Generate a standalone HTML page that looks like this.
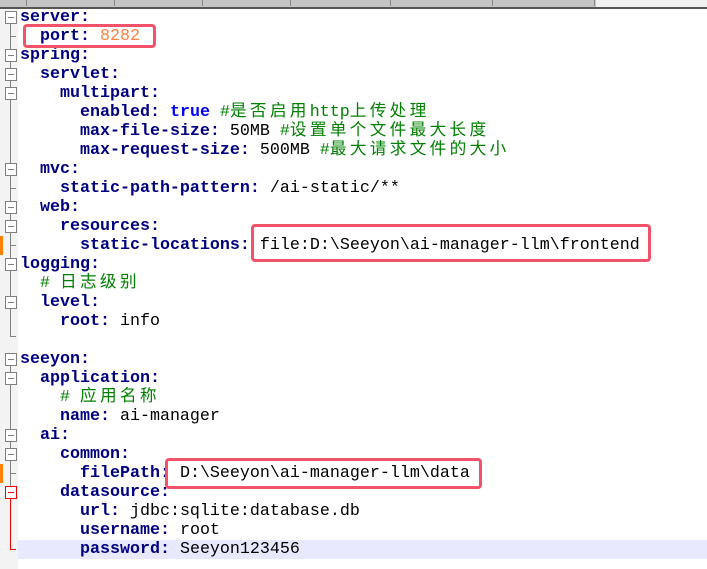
<!DOCTYPE html>
<html><head><meta charset="utf-8"><style>
body{margin:0;width:707px;height:569px;overflow:hidden;background:#fff;position:relative;font-family:"Liberation Mono","Noto Sans CJK SC",monospace;font-size:16.67px}
.tabs{position:absolute;left:0;top:0;width:707px;height:7px;background:#c4c4c4}
.tab{position:absolute;top:0;height:6px;border-right:1px solid #888}
.tl{position:absolute;left:0;top:7px;width:707px;height:2px;background:#555}
.gut{position:absolute;left:0;top:9px;width:18px;height:560px;background:#f3f3f3}
.ln{position:absolute;left:20px;height:19px;line-height:19px;white-space:pre;color:#000}
.k{color:#000080;font-weight:bold}
.t{color:#0000ff;font-weight:bold}
.c{color:#008000}
.z{letter-spacing:3.3px}
.o{color:#ff8040}
.box{position:absolute;border:3px solid #f2536a;border-radius:4px}
.fb{position:absolute;left:5px;width:10px;height:11px;border:1px solid #808080;background:#fff}
.fb:after{content:"";position:absolute;left:2px;top:5px;width:6px;height:1px;background:#808080}
.fb.r{border-color:#e00}.fb.r:after{background:#e00}
.vl{position:absolute;left:10px;width:1px;background:#808080}
.hl{position:absolute;height:1px;left:10px;width:6px;background:#808080}
.mk{position:absolute;left:0;width:3px;height:19px;background:#ff8000}
</style></head><body>
<div class="tabs">
<div class="tab" style="left:0;width:26px"></div>
<div class="tab" style="left:28px;width:86px"></div>
<div class="tab" style="left:116px;width:86px"></div>
<div class="tab" style="left:204px;width:86px"></div>
<div class="tab" style="left:292px;width:98px"></div>
<div class="tab" style="left:392px;width:100px"></div>
<div class="tab" style="left:494px;width:100px"></div>
<div style="position:absolute;left:596px;top:0;width:111px;height:7px;background:#f0f0f0"></div>
</div>
<div class="tl"></div>
<div class="gut"></div>
<div style="position:absolute;left:18px;top:540px;width:689px;height:19px;background:#e8e8ff"></div>

<div class="vl" style="top:22px;height:314px"></div>
<div class="vl" style="top:364px;height:185px"></div>
<div class="vl" style="top:497px;height:52px;background:#e00"></div>
<div class="hl" style="top:36px"></div>
<div class="hl" style="top:188px"></div>
<div class="hl" style="top:245px"></div>
<div class="hl" style="top:336px"></div>
<div class="hl" style="top:473px"></div>
<div class="hl" style="top:549px;background:#e00"></div>
<div class="fb" style="top:11px"></div>
<div class="fb" style="top:49px"></div>
<div class="fb" style="top:68px"></div>
<div class="fb" style="top:87px"></div>
<div class="fb" style="top:163px"></div>
<div class="fb" style="top:201px"></div>
<div class="fb" style="top:220px"></div>
<div class="fb" style="top:258px"></div>
<div class="fb" style="top:296px"></div>
<div class="fb" style="top:353px"></div>
<div class="fb" style="top:372px"></div>
<div class="fb" style="top:429px"></div>
<div class="fb" style="top:448px"></div>
<div class="fb r" style="top:486px"></div>
<div class="mk" style="top:236px"></div>
<div class="mk" style="top:464px"></div>

<div class="ln" style="top:8px"><span class="k">server:</span></div>
<div class="ln" style="top:27px">  <span class="k">port:</span> <span class="o">8282</span></div>
<div class="ln" style="top:46px"><span class="k">spring:</span></div>
<div class="ln" style="top:65px">  <span class="k">servlet:</span></div>
<div class="ln" style="top:84px">    <span class="k">multipart:</span></div>
<div class="ln" style="top:103px">      <span class="k">enabled:</span> <span class="t">true</span> <span class="c">#<span class="z">是否启用</span>http<span class="z">上传处理</span></span></div>
<div class="ln" style="top:122px">      <span class="k">max-file-size:</span> 50MB <span class="c">#<span class="z">设置单个文件最大长度</span></span></div>
<div class="ln" style="top:141px">      <span class="k">max-request-size:</span> 500MB <span class="c">#<span class="z">最大请求文件的大小</span></span></div>
<div class="ln" style="top:160px">  <span class="k">mvc:</span></div>
<div class="ln" style="top:179px">    <span class="k">static-path-pattern:</span> /ai-static/**</div>
<div class="ln" style="top:198px">  <span class="k">web:</span></div>
<div class="ln" style="top:217px">    <span class="k">resources:</span></div>
<div class="ln" style="top:236px">      <span class="k">static-locations:</span> file:D:\Seeyon\ai-manager-llm\frontend</div>
<div class="ln" style="top:255px"><span class="k">logging:</span></div>
<div class="ln" style="top:274px">  <span class="c"># <span class="z">日志级别</span></span></div>
<div class="ln" style="top:293px">  <span class="k">level:</span></div>
<div class="ln" style="top:312px">    <span class="k">root:</span> info</div>
<div class="ln" style="top:350px"><span class="k">seeyon:</span></div>
<div class="ln" style="top:369px">  <span class="k">application:</span></div>
<div class="ln" style="top:388px">    <span class="c"># <span class="z">应用名称</span></span></div>
<div class="ln" style="top:407px">    <span class="k">name:</span> ai-manager</div>
<div class="ln" style="top:426px">  <span class="k">ai:</span></div>
<div class="ln" style="top:445px">    <span class="k">common:</span></div>
<div class="ln" style="top:464px">      <span class="k">filePath:</span> D:\Seeyon\ai-manager-llm\data</div>
<div class="ln" style="top:483px">    <span class="k">datasource:</span></div>
<div class="ln" style="top:502px">      <span class="k">url:</span> jdbc:sqlite:database.db</div>
<div class="ln" style="top:521px">      <span class="k">username:</span> root</div>
<div class="ln" style="top:540px">      <span class="k">password:</span> Seeyon123456</div>

<div class="box" style="left:23px;top:24px;width:127px;height:18px"></div>
<div class="box" style="left:251px;top:224px;width:394px;height:32px"></div>
<div class="box" style="left:165px;top:458px;width:311px;height:25px"></div>
</body></html>
